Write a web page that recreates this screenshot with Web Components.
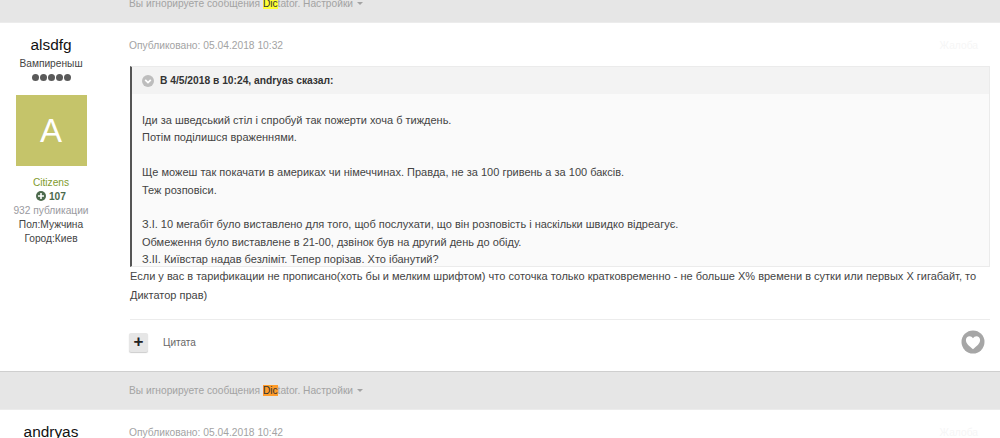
<!DOCTYPE html>
<html lang="ru">
<head>
<meta charset="utf-8">
<title>Тема</title>
<style>
    html, body { margin: 0; height: 438px; overflow: hidden; background: #fff; }
    body { font: 11px/19px "Liberation Sans", Arial, sans-serif; color: #444; }
</style>
</head>
<body>
<ignored-bar class="first" mark="#ffff33"></ignored-bar>
<forum-post author="alsdfg" title-rank="Вампиреныш" letter="A" date="05.04.2018 10:32">
    <quote-box cite="В 4/5/2018 в 10:24, andryas сказал:">
        <p>Іди за шведський стіл і спробуй так пожерти хоча б тиждень.<br>Потім поділишся враженнями.</p>
        <p>Ще можеш так покачати в америках чи німеччинах. Правда, не за 100 гривень а за 100 баксів.<br>Теж розповіси.</p>
        <p>З.І. 10 мегабіт було виставлено для того, щоб послухати, що він розповість і наскільки швидко відреагує.<br>Обмеження було виставлене в 21-00, дзвінок був на другий день до обіду.<br>З.ІІ. Київстар надав безліміт. Тепер порізав. Хто ібанутий?</p>
    </quote-box>
    Если у вас в тарификации не прописано(хоть бы и мелким шрифтом) что соточка только кратковременно - не больше X% времени в сутки или первых X гигабайт, то Диктатор прав)
</forum-post>
<ignored-bar mark="#ff9c2a"></ignored-bar>
<forum-post author="andryas" date="05.04.2018 10:42" short></forum-post>

<script>
class IgnoredBar extends HTMLElement {
    constructor() {
        super();
        this.attachShadow({mode: "open"});
    }

    connectedCallback() {
        const first = this.classList.contains("first");
        this.shadowRoot.innerHTML = `
        <style>
            :host {
                display: block;
                box-sizing: border-box;
                height: 39px;
                margin-top: ${first ? "-16px" : "0"};
                padding: 10px 0 0 129px;
                background: #e6e6e6;
                border-top: 1px solid #cfcfcf;
                border-bottom: 1px solid #ececec;
                color: #a3a3a3;
                font-size: 10.2px;
                line-height: 17px;
            }
            mark { background: ${this.getAttribute("mark")}; color: #333; }
            i {
                display: inline-block;
                margin-left: 1px;
                vertical-align: 2px;
                border: 3.500px solid transparent;
                border-top-color: #a3a3a3;
                border-bottom: 0;
            }
        </style>
        Вы игнорируете сообщения <mark>Dic</mark>tator. Настройки <i></i>
        `;
    }
}

class QuoteBox extends HTMLElement {
    constructor() {
        super();
        this.attachShadow({mode: "open"});
    }

    connectedCallback() {
        this.shadowRoot.innerHTML = `
        <style>
            :host {
                display: block;
                box-sizing: border-box;
                height: 201px;
                background: #fafafa;
                border: 1px solid #ebebeb;
                border-left: 2px solid #555;
                color: #444;
                line-height: 17.4px;
            }
            .cite {
                display: flex;
                align-items: center;
                gap: 6px;
                height: 27px;
                padding-left: 10px;
                background: #f3f3f3;
                color: #333;
                font-size: 10.25px;
                font-weight: bold;
            }
            svg { width: 12px; height: 12px; }
            .body { padding: 18px 11px 0 10px; }
            ::slotted(p) { margin: 0 0 17.4px; }
        </style>
        <div class="cite">
            <svg viewBox="0 0 12 12">
                <circle cx="6" cy="6" r="6" fill="#bdbdbd"/>
                <path d="M3.2 4.8 6 7.6l2.8-2.8" fill="none" stroke="#fff" stroke-width="1.7"/>
            </svg>
            <span>${this.getAttribute("cite")}</span>
        </div>
        <div class="body"><slot></slot></div>
        `;
    }
}

class ForumPost extends HTMLElement {
    constructor() {
        super();
        this.attachShadow({mode: "open"});
    }

    authorInfo() {
        if (!this.hasAttribute("title-rank")) return "";
        return `
            <div class="rank">${this.getAttribute("title-rank")}</div>
            <div class="pips"><b></b><b></b><b></b><b></b><b></b></div>
            <div class="avatar">${this.getAttribute("letter")}</div>
            <div class="group">Citizens</div>
            <div class="rep">
                <svg viewBox="0 0 10 10">
                    <circle cx="5" cy="5" r="5" fill="#4d6a4d"/>
                    <path d="M5 2v6M2 5h6" stroke="#fff" stroke-width="1.6"/>
                </svg>
                107
            </div>
            <div class="count">932 публикации</div>
            <div>Пол:Мужчина</div>
            <div>Город:Киев</div>
        `;
    }

    controls() {
        if (this.hasAttribute("short")) return "";
        return `
            <div class="controls">
                <span class="plus">+</span>
                <span class="quote">Цитата</span>
                <svg class="like" viewBox="0 0 24 24">
                    <circle cx="12" cy="12" r="11.5" fill="#a6a6a6"/>
                    <path d="M12 19.2C8 16 4.9 13.500 4.900 10.100 4.900 7.800 6.600 6.200 8.600 6.200c1.400 0 2.600.7 3.400 2 .8-1.300 2-2 3.400-2 2 0 3.700 1.600 3.700 3.900 0 3.400-3.100 5.900-7.100 9.100z" fill="#fff"/>
                </svg>
            </div>
        `;
    }

    connectedCallback() {
        this.shadowRoot.innerHTML = `
        <style>
            :host {
                display: grid;
                grid-template-columns: 102px 860px;
                column-gap: 28px;
                box-sizing: border-box;
                background: #fff;
                ${this.hasAttribute("short") ? "" : "height: 348px;"}
                padding-top: 13px;
            }
            .author {
                text-align: center;
                font-size: 10.2px;
                line-height: 14px;
                color: #444;
            }
            h3 {
                margin: 0 0 3px;
                font-size: 15.4px;
                line-height: 18px;
                font-weight: normal;
                color: #111;
            }
            .pips { display: flex; justify-content: center; gap: 1px; height: 13px; align-items: center; }
            .pips b { width: 7px; height: 7px; border-radius: 50%; background: #5a5a5a; }
            .avatar {
                width: 71px;
                height: 71px;
                margin: 11px auto 10px;
                background: #c5c46a;
                color: #fff;
                font-size: 33px;
                line-height: 71px;
            }
            .group { color: #7f9b2e; }
            .rep { color: #4d6a4d; font-weight: bold; }
            .rep svg { width: 10px; height: 10px; vertical-align: -1px; }
            .count { color: #9a9aa0; }
            .meta {
                display: flex;
                justify-content: space-between;
                height: 30px;
                margin-left: -1px;
                box-sizing: border-box;
                font-size: 10.25px;
                color: #a3a3a3;
            }
            .report { color: #f6f6f6; padding-right: 12px; }
            .text { line-height: 19px; color: #444; }
            .controls {
                display: flex;
                align-items: center;
                height: 44px;
                margin-top: 14px;
                border-top: 1px solid #ececec;
            }
            .plus {
                width: 19px;
                height: 19px;
                margin-left: -1px;
                border-radius: 2px;
                background: #e6e6e6;
                box-shadow: 0 1px 1px #ccc;
                color: #222;
                font-size: 17px;
                font-weight: bold;
                line-height: 18px;
                text-align: center;
            }
            .quote { margin-left: 15px; font-size: 10px; color: #666; }
            .like { width: 24px; height: 24px; margin-left: auto; margin-right: 5px; }
        </style>
        <div class="author">
            <h3>${this.getAttribute("author")}</h3>
            ${this.authorInfo()}
        </div>
        <div>
            <div class="meta">
                <span>Опубликовано: ${this.getAttribute("date")}</span>
                <span class="report">Жалоба</span>
            </div>
            <div class="text"><slot></slot></div>
            ${this.controls()}
        </div>
        `;
    }
}

customElements.define("ignored-bar", IgnoredBar);
customElements.define("quote-box", QuoteBox);
customElements.define("forum-post", ForumPost);
</script>
</body>
</html>
